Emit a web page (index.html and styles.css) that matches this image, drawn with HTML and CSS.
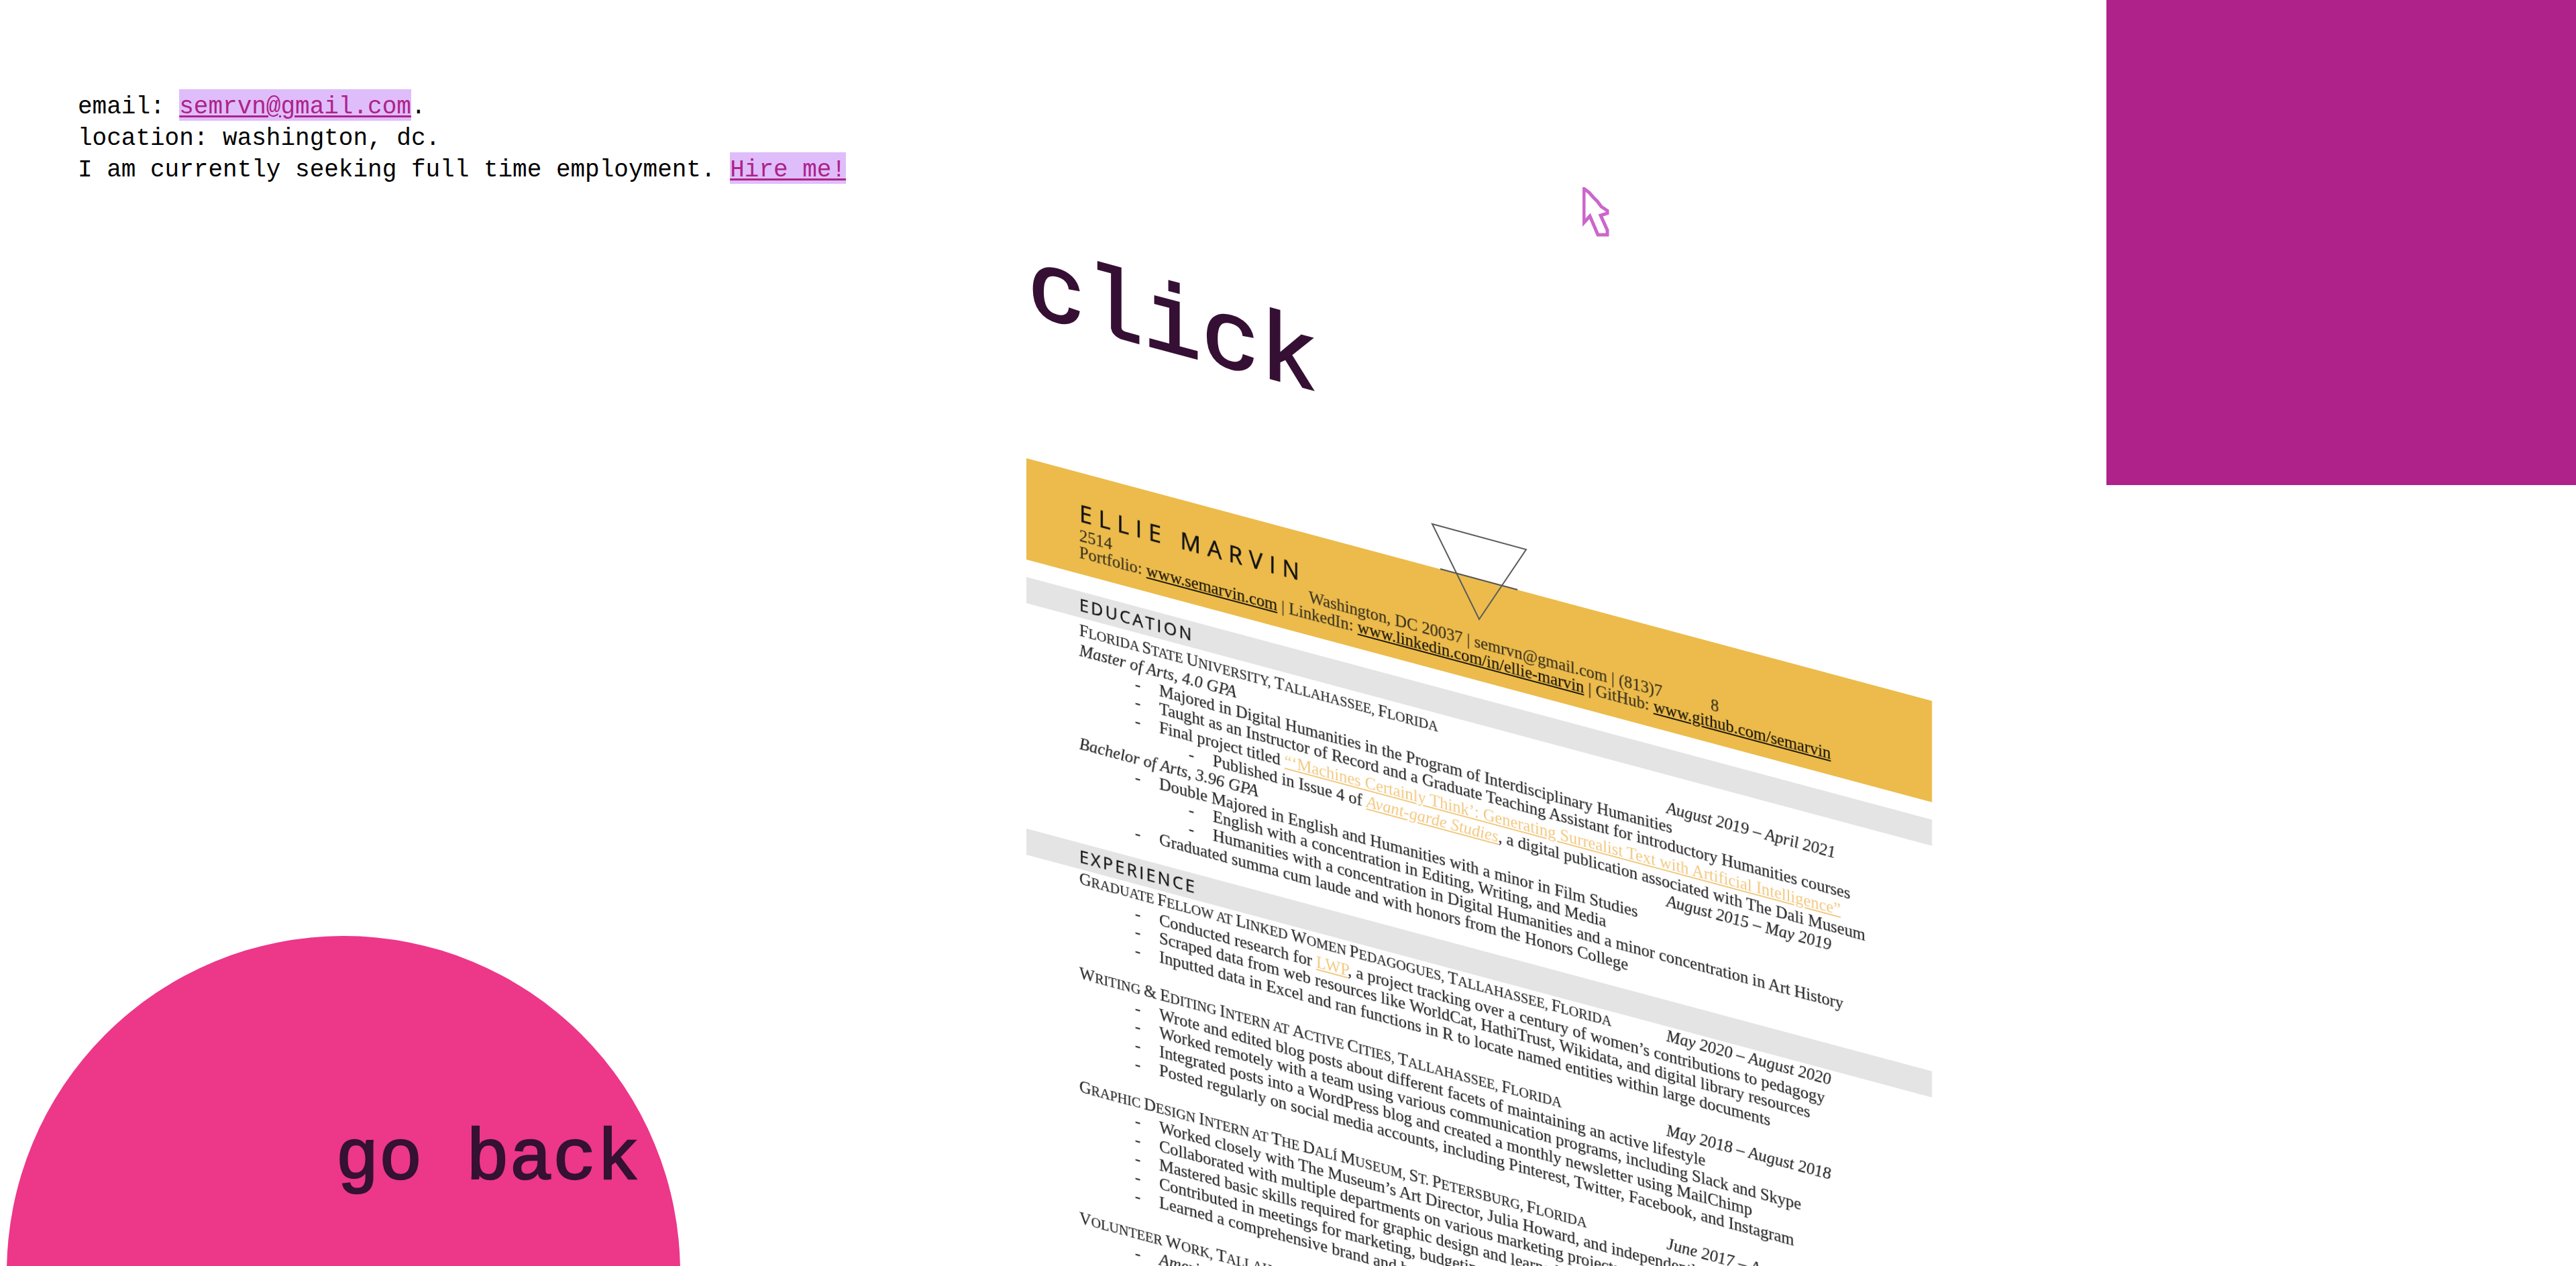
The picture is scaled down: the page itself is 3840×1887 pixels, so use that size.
FILE: index.html
```html
<!DOCTYPE html>
<html lang="en">
<head>
<meta charset="utf-8">
<title>resume</title>
<link rel="stylesheet" href="styles.css">
</head>
<body>
<main class="page">
<p class="contact">email: <a class="hl" href="#">semrvn@gmail.com</a>.<br>location: washington, dc.<br>I am currently seeking full time employment. <a class="hl" href="#">Hire me!</a></p>

<div class="square"></div>

<svg class="cursor" viewBox="0 0 44 80" width="44" height="80" aria-hidden="true">
  <path d="M2 2 L2 53 L11 43 L23 71 L37 71 L37 64 L27 42 L37 39 L37 35 L28 29 L22 21 L16 15 L10 8 Z" fill="#fff" stroke="#cc66cc" stroke-width="5" stroke-linejoin="miter"/>
</svg>

<div class="click">click</div>

<section class="resume">
  <header class="head">
    <h1 class="name">ELLIE MARVIN</h1>
    <div class="addr"><span class="addr-a">2514</span><span class="addr-b">Washington, DC 20037 | semrvn@gmail.com | (813)7</span><span class="addr-c">8</span></div>
    <div class="line">Portfolio: <u>www.semarvin.com</u> | LinkedIn: <u>www.linkedin.com/in/ellie-marvin</u> | GitHub: <u>www.github.com/semarvin</u></div>
  </header>

  <h2 class="band first">EDUCATION</h2>
  <div class="row"><span class="caps"><b>F</b>lorida <b>S</b>tate <b>U</b>niversity, <b>T</b>allahassee, <b>F</b>lorida</span></div>
  <div class="row"><i class="role">Master of Arts, 4.0 GPA</i><i class="date">August 2019 – April 2021</i></div>
  <div class="li">Majored in Digital Humanities in the Program of Interdisciplinary Humanities</div>
  <div class="li">Taught as an Instructor of Record and a Graduate Teaching Assistant for introductory Humanities courses</div>
  <div class="li">Final project titled <a class="ln" href="#">“‘Machines Certainly Think’: Generating Surrealist Text with Artificial Intelligence”</a></div>
  <div class="li sub">Published in Issue 4 of <a class="ln" href="#"><i>Avant-garde Studies</i></a>, a digital publication associated with The Dali Museum</div>
  <div class="row"><i class="role">Bachelor of Arts, 3.96 GPA</i><i class="date">August 2015 – May 2019</i></div>
  <div class="li">Double Majored in English and Humanities with a minor in Film Studies</div>
  <div class="li sub">English with a concentration in Editing, Writing, and Media</div>
  <div class="li sub">Humanities with a concentration in Digital Humanities and a minor concentration in Art History</div>
  <div class="li">Graduated summa cum laude and with honors from the Honors College</div>

  <h2 class="band second">EXPERIENCE</h2>
  <div class="row"><span class="role caps"><b>G</b>raduate <b>F</b>ellow at <b>L</b>inked <b>W</b>omen <b>P</b>edagogues, <b>T</b>allahassee, <b>F</b>lorida</span><i class="date">May 2020 – August 2020</i></div>
  <div class="li">Conducted research for <a class="ln" href="#">LWP</a>, a project tracking over a century of women’s contributions to pedagogy</div>
  <div class="li">Scraped data from web resources like WorldCat, HathiTrust, Wikidata, and digital library resources</div>
  <div class="li">Inputted data in Excel and ran functions in R to locate named entities within large documents</div>
  <div class="gap"></div>
  <div class="row"><span class="role caps"><b>W</b>riting <b>&amp;</b> <b>E</b>diting <b>I</b>ntern at <b>A</b>ctive <b>C</b>ities, <b>T</b>allahassee, <b>F</b>lorida</span><i class="date">May 2018 – August 2018</i></div>
  <div class="li">Wrote and edited blog posts about different facets of maintaining an active lifestyle</div>
  <div class="li">Worked remotely with a team using various communication programs, including Slack and Skype</div>
  <div class="li">Integrated posts into a WordPress blog and created a monthly newsletter using MailChimp</div>
  <div class="li">Posted regularly on social media accounts, including Pinterest, Twitter, Facebook, and Instagram</div>
  <div class="gap"></div>
  <div class="row"><span class="role caps"><b>G</b>raphic <b>D</b>esign <b>I</b>ntern at <b>T</b>he <b>D</b>alí <b>M</b>useum, <b>S</b>t. <b>P</b>etersburg, <b>F</b>lorida</span><i class="date">June 2017 – August 2017</i></div>
  <div class="li">Worked closely with The Museum’s Art Director, Julia Howard, and independently</div>
  <div class="li">Collaborated with multiple departments on various marketing projects</div>
  <div class="li">Mastered basic skills required for graphic design and learned</div>
  <div class="li">Contributed in meetings for marketing, budgeting, and learned</div>
  <div class="li">Learned a comprehensive brand and budgeting</div>
  <div class="gap"></div>
  <div class="row"><span class="role caps"><b>V</b>olunteer <b>W</b>ork, <b>T</b>allahassee, <b>F</b>lorida</span></div>
  <div class="li"><i>American</i></div>
</section>

<svg class="triangle" viewBox="0 0 150 150" width="150" height="150" aria-hidden="true">
  <path d="M5 6 L145 44 L75 148 Z" fill="none" stroke="#5c5c5c" stroke-width="2"/>
  <path d="M17 73 L132 104" fill="none" stroke="#555" stroke-width="2"/>
</svg>

<div class="circle"><a class="back" href="#">go back</a></div>
</main>
</body>
</html>
```
FILE: styles.css
```css
html, body {
  margin: 0;
  padding: 0;
  background: #fff;
}
.page {
  position: relative;
  width: 3840px;
  height: 1887px;
  overflow: hidden;
}
.contact {
  margin: 0;
  padding: 136px 0 0 116px;
  font: 36px/47px "Liberation Mono", monospace;
  color: #000;
}
.hl {
  display: inline-block;
  line-height: 41px;
  padding-top: 6px;
  margin-top: -3px;
  background: #dfbdfb;
  color: #ae2289;
  text-decoration: underline;
  text-decoration-thickness: 3px;
  text-underline-offset: 3px;
}
.square {
  position: absolute;
  left: 3140px;
  top: 0;
  width: 700px;
  height: 723px;
  background: #ae2289;
}
.cursor {
  position: absolute;
  left: 2359px;
  top: 279px;
}
.click {
  position: absolute;
  left: 1532px;
  top: 357px;
  font: 144px/1 "Liberation Mono", monospace;
  color: #361034;
  -webkit-text-stroke: 3px #361034;
  transform: skewY(15deg);
  transform-origin: 0 0;
}
.resume {
  position: absolute;
  left: 1530px;
  top: 683px;
  width: 1350px;
  transform: skewY(15deg);
  transform-origin: 0 0;
  font: 24.45px/27.8px "Liberation Serif", serif;
  color: #2c2c2c;
  -webkit-text-stroke: 0.25px;
  filter: blur(0.6px);
}
.head {
  height: 151px;
  box-sizing: border-box;
  background: #ecbb4b;
  padding: 46px 0 0 79px;
}
.name {
  margin: 0;
  font: 400 34px/28px "Open Sans", sans-serif;
  letter-spacing: 9.8px;
  color: #111;
  -webkit-text-stroke: 0.5px;
}
.addr {
  display: flex;
  line-height: 24px;
  margin-top: 8px;
  color: #3d3520;
}
.addr-a { width: 342px; }
.addr-b { width: 599px; }
.line {
  line-height: 25px;
  color: #3d3520;
  white-space: nowrap;
}
.line u { color: #1c1808; }
.band {
  margin: 0;
  height: 39px;
  background: #e4e4e4;
  padding-left: 79px;
  font: 400 25px/39px "Open Sans", sans-serif;
  letter-spacing: 3.3px;
  color: #151515;
  -webkit-text-stroke: 0.4px;
}
.first { margin-top: 26px; margin-bottom: 5px; }
.second { margin-top: 23px; }
.row {
  display: flex;
  padding-left: 79px;
}
.role {
  flex: 0 0 875px;
}
.caps {
  font-size: 20.1px;
  text-transform: uppercase;
  white-space: nowrap;
}
.caps b {
  font-size: 24.45px;
  font-weight: 400;
}
.li {
  position: relative;
  padding-left: 198px;
  white-space: nowrap;
}
.li::before {
  content: "-";
  position: absolute;
  left: 162px;
}
.sub { padding-left: 278px; }
.sub::before { left: 242px; }
.ln {
  color: #f2c87e;
  -webkit-text-stroke: 0;
  text-decoration: underline;
}
.gap { height: 27.8px; }
.triangle {
  position: absolute;
  left: 2130px;
  top: 775px;
}
.circle {
  position: absolute;
  left: 10px;
  top: 1395px;
  width: 1004px;
  height: 1004px;
  border-radius: 50%;
  background: #ed3789;
}
.back {
  position: absolute;
  left: 490px;
  top: 279px;
  font: 108px/1 "Liberation Mono", monospace;
  color: #351133;
  -webkit-text-stroke: 2.5px #351133;
  text-decoration: none;
  white-space: nowrap;
}
```
